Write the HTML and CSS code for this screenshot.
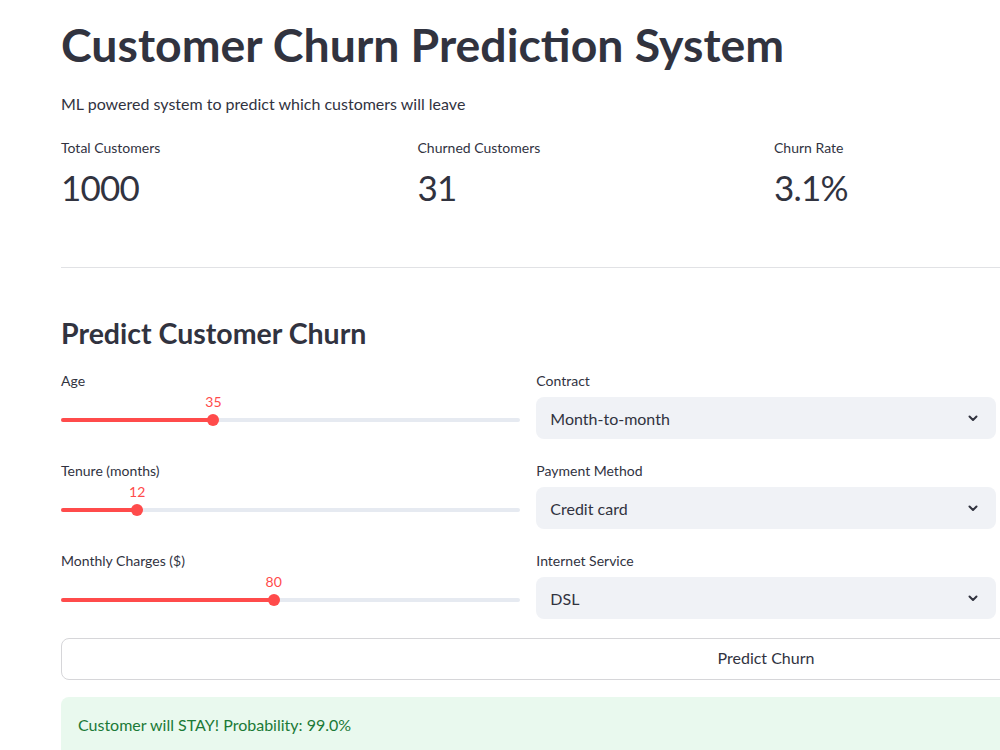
FILE: index.html
```html
<!DOCTYPE html>
<html lang="en">
<head>
  <meta charset="UTF-8">
  <meta name="viewport" content="width=device-width, initial-scale=1.0">
  <title>Customer Churn Prediction System</title>
  <link rel="stylesheet" href="styles.css">
</head>
<body>
  <div class="main">
    <h1 class="title">Customer Churn Prediction System</h1>
    <p class="subtitle">ML powered system to predict which customers will leave</p>

    <div class="metrics">
      <div class="metric">
        <div class="metric-label">Total Customers</div>
        <div class="metric-value">1000</div>
      </div>
      <div class="metric">
        <div class="metric-label">Churned Customers</div>
        <div class="metric-value">31</div>
      </div>
      <div class="metric">
        <div class="metric-label">Churn Rate</div>
        <div class="metric-value">3.1%</div>
      </div>
      <div class="metric"></div>
    </div>

    <hr class="divider">

    <h2 class="section-title">Predict Customer Churn</h2>

    <div class="form">
      <div class="form-col">
        <div class="field">
          <div class="field-label">Age</div>
          <div class="slider">
            <div class="slider-value" style="left: 33.2%">35</div>
            <div class="slider-track">
              <div class="slider-fill" style="width: 33.2%"></div>
              <div class="slider-thumb" style="left: 33.2%"></div>
            </div>
          </div>
        </div>
        <div class="field">
          <div class="field-label">Tenure (months)</div>
          <div class="slider">
            <div class="slider-value" style="left: 16.6%">12</div>
            <div class="slider-track">
              <div class="slider-fill" style="width: 16.6%"></div>
              <div class="slider-thumb" style="left: 16.6%"></div>
            </div>
          </div>
        </div>
        <div class="field">
          <div class="field-label">Monthly Charges ($)</div>
          <div class="slider">
            <div class="slider-value" style="left: 46.3%">80</div>
            <div class="slider-track">
              <div class="slider-fill" style="width: 46.3%"></div>
              <div class="slider-thumb" style="left: 46.3%"></div>
            </div>
          </div>
        </div>
      </div>

      <div class="form-col">
        <div class="field">
          <div class="field-label">Contract</div>
          <div class="select">
            <span>Month-to-month</span>
            <svg class="chevron" width="10" height="7" viewBox="0 0 10 7"><path d="M1.5 1.5 L5 5 L8.5 1.5" fill="none" stroke="#31333f" stroke-width="2" stroke-linecap="round" stroke-linejoin="round"/></svg>
          </div>
        </div>
        <div class="field">
          <div class="field-label">Payment Method</div>
          <div class="select">
            <span>Credit card</span>
            <svg class="chevron" width="10" height="7" viewBox="0 0 10 7"><path d="M1.5 1.5 L5 5 L8.5 1.5" fill="none" stroke="#31333f" stroke-width="2" stroke-linecap="round" stroke-linejoin="round"/></svg>
          </div>
        </div>
        <div class="field">
          <div class="field-label">Internet Service</div>
          <div class="select">
            <span>DSL</span>
            <svg class="chevron" width="10" height="7" viewBox="0 0 10 7"><path d="M1.5 1.5 L5 5 L8.5 1.5" fill="none" stroke="#31333f" stroke-width="2" stroke-linecap="round" stroke-linejoin="round"/></svg>
          </div>
        </div>
      </div>

      <div class="form-col"></div>
    </div>

    <button class="predict-btn">Predict Churn</button>

    <div class="alert-success">Customer will STAY! Probability: 99.0%</div>
  </div>
</body>
</html>
```

FILE: styles.css
```css
html, body {
  margin: 0;
  padding: 0;
  overflow: hidden;
  background: #ffffff;
}
body {
  font-family: Lato, "Noto Sans", sans-serif;
  color: #31333f;
}
.main {
  width: 1410px;
  padding-left: 61px;
}
.title {
  font-size: 46.4px;
  font-weight: 700;
  line-height: 54px;
  margin: 17px 0 0;
}
.subtitle {
  font-size: 16px;
  line-height: 24px;
  margin: 21px 0 0;
}
.metrics {
  display: grid;
  grid-template-columns: repeat(4, 1fr);
  gap: 16px;
  margin-top: 22px;
}
.metric-label {
  font-size: 14px;
  line-height: 20px;
}
.metric-value {
  font-size: 35px;
  line-height: 44px;
  margin-top: 7px;
  letter-spacing: -0.8px;
}
.divider {
  border: none;
  border-top: 1px solid #e1e2e5;
  margin: 58px 0 0;
}
.section-title {
  font-size: 28.5px;
  font-weight: 700;
  line-height: 44px;
  margin: 43px 0 0;
}
.form {
  display: grid;
  grid-template-columns: repeat(3, 1fr);
  gap: 16px;
  margin-top: 16px;
}
.form-col {
  display: flex;
  flex-direction: column;
  gap: 21px;
}
.field {
  height: 69px;
}
.field-label {
  font-size: 14px;
  line-height: 20px;
}
.slider {
  position: relative;
  padding-top: 20px;
}
.slider-value {
  position: absolute;
  top: 2px;
  transform: translateX(-50%);
  font-size: 14px;
  line-height: 18px;
  color: #ff4b4b;
}
.slider-track {
  position: relative;
  height: 4px;
  margin-top: 7px;
  background: #e6eaf1;
  border-radius: 2px;
}
.slider-fill {
  height: 4px;
  background: #ff4b4b;
  border-radius: 2px;
}
.slider-thumb {
  position: absolute;
  top: -4px;
  width: 12px;
  height: 12px;
  margin-left: -6px;
  border-radius: 50%;
  background: #ff4b4b;
}
.select {
  display: flex;
  align-items: center;
  justify-content: space-between;
  height: 42px;
  margin-top: 6px;
  padding: 0 18px 0 14px;
  background: #f0f2f6;
  border-radius: 8px;
  font-size: 16px;
}
.predict-btn {
  display: block;
  width: 100%;
  height: 42px;
  margin-top: 18px;
  padding: 0 0 3px;
  background: #ffffff;
  border: 1px solid #d6d6d9;
  border-radius: 8px;
  font-family: inherit;
  font-size: 16px;
  color: #31333f;
}
.alert-success {
  margin-top: 17px;
  padding: 16px 17px;
  height: 80px;
  background: #e9f9ee;
  border-radius: 8px;
  font-size: 16px;
  line-height: 24px;
  color: #1b7a37;
}
```
